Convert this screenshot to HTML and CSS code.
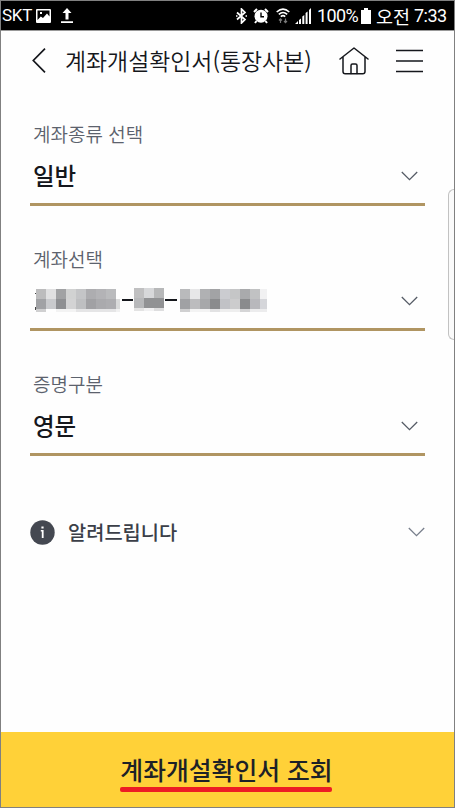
FILE: index.html
```html
<!DOCTYPE html>
<html lang="ko">
<head>
<meta charset="utf-8">
<title>계좌개설확인서(통장사본)</title>
<link rel="stylesheet" href="styles.css">
</head>
<body>
<div class="screen">
  <div class="status">
    <span class="carrier">SKT</span>
    <svg class="picture" width="15" height="14" viewBox="0 0 15 14"><path fill="#fff" fill-rule="evenodd" d="M1 0h13a1 1 0 0 1 1 1v12a1 1 0 0 1-1 1H1a1 1 0 0 1-1-1V1a1 1 0 0 1 1-1zM1.500 1.500v9.500l3.300-3.500 2.200 1.500 4-4.500 2.500 3V1.500zM4 3h2v2H4z"/></svg>
    <svg class="upload" width="12" height="15" viewBox="0 0 12 15"><path fill="#fff" d="M6 0l4.500 5H7.500v6.500h-3V5h-3zM0 13.300h12V15H0z"/></svg>
    <svg class="bluetooth" width="11" height="16" viewBox="0 0 11 16"><path fill="none" stroke="#fff" stroke-width="1.700" d="M1 4.500l8 7L5.500 15V1L9 4.500l-8 7M0 8h1.500M9.500 8H11"/></svg>
    <svg class="alarm" width="16" height="16" viewBox="0 0 16 16"><circle cx="8" cy="8.200" r="6.500" fill="#fff"/><path fill="none" stroke="#fff" stroke-width="2" d="M1 4l3-3M12 1l3 3M3.500 13L2 15M12.500 13l1.500 2"/><path fill="none" stroke="#000" stroke-width="1.400" d="M8 4.500v4.200h3"/></svg>
    <svg class="wifi" width="14" height="16" viewBox="0 0 14 16"><g fill="none" stroke="#fff" stroke-width="1.600"><path d="M.700 4Q7-1.800 13.300 4M2.800 6.400q4.200-3.800 8.400 0M4.800 8.600q2.200-2 4.400 0"/></g><path fill="none" stroke="#777" stroke-width="1.200" d="M4.500 15v-4M3 12.500l1.500-1.700L6 12.500M9.500 10.500v4M8 13l1.500 1.700L11 13"/></svg>
    <svg class="signal" width="16" height="16" viewBox="0 0 16 16"><path fill="#fff" d="M0 16l3-3v3zM4 12l2-1.500V16H4zM7.300 8.500l2-1.500v9h-2zM10.600 5l2-1.500V16h-2zM14 2l2-2v16h-2z"/></svg>
    <span class="percent">100%</span>
    <svg class="battery" width="10" height="16" viewBox="0 0 10 16"><path fill="#fff" d="M3 0h4v2h3v14H0V2h3z"/></svg>
    <span class="ampm">오전</span>
    <span class="clock">7:33</span>
  </div>

  <header class="header">
    <svg class="back" width="14" height="25" viewBox="0 0 14 25"><path fill="none" stroke="#15171c" stroke-width="1.700" d="M13 .700L1.300 12.500 13 24.300"/></svg>
    <h1 class="title">계좌개설확인서(통장사본)</h1>
    <svg class="home" width="30" height="28" viewBox="0 0 30 28"><g fill="none" stroke="#15171c" stroke-width="1.500" stroke-linejoin="round" stroke-linecap="round"><path d="M1 12L15 1l14 11M4 10v14.500a2.300 2.300 0 0 0 2.300 2.300h17.400a2.300 2.300 0 0 0 2.300-2.300V10"/><path d="M12 26.500v-8a1.500 1.500 0 0 1 1.500-1.500h3a1.500 1.500 0 0 1 1.500 1.500v8"/></g></svg>
    <svg class="menu" width="27" height="24" viewBox="0 0 27 24"><path stroke="#15171c" stroke-width="1.700" d="M0 1.500h27M0 12h27M0 22.500h27"/></svg>
  </header>

  <main class="form">
    <section class="field">
      <div class="label">계좌종류 선택</div>
      <div class="value">일반<svg class="chevron" width="17" height="10" viewBox="0 0 17 10"><path d="M.800 1l7.700 7.600L16.200 1"/></svg></div>
    </section>
    <section class="field">
      <div class="label">계좌선택</div>
      <div class="value">
        <svg class="masked" width="235" height="26" viewBox="33 287 235 26" shape-rendering="crispEdges">
          <path fill="#444" d="M35 293h1v1h-1zM35 307h1v3h-1z"/>
          <path fill="#bcbcbd" d="M36 289h10v10H36z"/><path fill="#e0e0e1" d="M46 289h10v10H46z"/><path fill="#a1a2a4" d="M56 289h10v10H56z"/><path fill="#d1d2d2" d="M66 289h10v10H66z"/><path fill="#c4c5c7" d="M76 289h10v10H76z"/><path fill="#adadb0" d="M86 289h10v10H86z"/><path fill="#b3b3b6" d="M96 289h10v10H96z"/><path fill="#babbbd" d="M106 289h10v10h-10z"/>
          <path fill="#a1a2a5" d="M36 299h10v10H36z"/><path fill="#c9cacd" d="M46 299h10v10H46z"/><path fill="#8e8f92" d="M56 299h10v10H56z"/><path fill="#d3d3d4" d="M66 299h10v10H66z"/><path fill="#bebfc1" d="M76 299h10v10H76z"/><path fill="#a1a1a4" d="M86 299h10v10H86z"/><path fill="#aaaaad" d="M96 299h10v10H96z"/><path fill="#adadb0" d="M106 299h10v10h-10z"/><path fill="#d9dada" d="M116 299h4v10h-4z"/>
          <path fill="#d0d0d1" d="M36 309h10v3H36z"/><path fill="#f3f3f3" d="M56 309h20v3H56z"/><path fill="#e5e5e6" d="M76 309h40v3H76z"/><path fill="#f1f1f1" d="M116 309h4v3h-4z"/>
          <path fill="#15171c" d="M122 299h11v2h-11zM165 299h12v2h-12z"/>
          <path fill="#c0c0c1" d="M134 288h10v10h-10z"/><path fill="#d7d8da" d="M144 288h10v10h-10z"/><path fill="#b7b8b9" d="M154 288h10v10h-10z"/><path fill="#b7b8ba" d="M134 298h10v10h-10z"/><path fill="#919294" d="M144 298h20v10h-20z"/><path fill="#e3e3e3" d="M134 308h10v3h-10z"/><path fill="#f1f1f2" d="M144 308h10v3h-10z"/><path fill="#dededf" d="M154 308h10v3h-10z"/>
          <path fill="#b9babc" d="M180 289h10v10h-10z"/><path fill="#e7e7e8" d="M190 289h10v10h-10z"/><path fill="#b0b1b3" d="M200 289h10v10h-10z"/><path fill="#a2a3a5" d="M210 289h10v10h-10z"/><path fill="#cbccd0" d="M220 289h10v10h-10z"/><path fill="#c5c6c7" d="M230 289h10v10h-10z"/><path fill="#a9aaac" d="M240 289h10v10h-10z"/><path fill="#c1c2c3" d="M250 289h10v10h-10z"/><path fill="#f1f1f2" d="M260 289h7v10h-7z"/>
          <path fill="#a0a1a4" d="M180 299h10v10h-10z"/><path fill="#bcbcbe" d="M190 299h10v10h-10z"/><path fill="#a7a8aa" d="M200 299h10v10h-10z"/><path fill="#8a8b8d" d="M210 299h10v10h-10z"/><path fill="#c1c2c6" d="M220 299h10v10h-10z"/><path fill="#cccccd" d="M230 299h10v10h-10z"/><path fill="#8a8b8d" d="M240 299h10v10h-10z"/><path fill="#b8b8bc" d="M250 299h10v10h-10z"/><path fill="#d5d6da" d="M260 299h7v10h-7z"/>
          <path fill="#d0d0d1" d="M180 309h10v3h-10z"/><path fill="#f3f3f3" d="M190 309h20v3h-20z"/><path fill="#e2e2e3" d="M210 309h10v3h-10z"/><path fill="#eee" d="M220 309h20v3h-20z"/><path fill="#d5d5d6" d="M240 309h10v3h-10z"/><path fill="#ececed" d="M250 309h17v3h-17z"/>
        </svg>
        <svg class="chevron" width="17" height="10" viewBox="0 0 17 10"><path d="M.800 1l7.700 7.600L16.200 1"/></svg>
      </div>
    </section>
    <section class="field">
      <div class="label">증명구분</div>
      <div class="value">영문<svg class="chevron" width="17" height="10" viewBox="0 0 17 10"><path d="M.800 1l7.700 7.600L16.200 1"/></svg></div>
    </section>
    <section class="notice">
      <svg width="25" height="25" viewBox="0 0 25 25"><circle cx="12.500" cy="12.500" r="12.200" fill="#444851"/><path fill="#fff" d="M11.400 6.500h2.200v2h-2.200zM10.800 10h2.800v8h-1.800v-6.500h-1z"/></svg>
      <span class="notice-text">알려드립니다</span>
      <svg class="chevron light" width="17" height="10" viewBox="0 0 17 10"><path d="M.800 1l7.700 7.600L16.200 1"/></svg>
    </section>
  </main>

  <footer class="submit"><span class="submit-text">계좌개설확인서 조회</span><span class="underline"></span></footer>
  <div class="handle"></div>
</div>
</body>
</html>
```
FILE: styles.css
```css
* { box-sizing: border-box; }
body { margin: 0; font-family: "Noto Sans CJK KR", sans-serif; }
svg { display: block; flex: none; }
.screen {
  position: relative;
  display: flex;
  flex-direction: column;
  width: 455px;
  height: 808px;
  overflow: hidden;
  border: 1px solid #808080;
  background: #fefefe;
  white-space: nowrap;
}
.status {
  display: flex;
  align-items: center;
  flex: none;
  height: 29px;
  padding: 0 0 0 1px;
  background: #000;
  color: #fff;
  font: 18px/29px Roboto, "Noto Sans CJK KR", sans-serif;
}
.carrier { width: 30px; font-size: 17px; letter-spacing: -0.3px; }
.picture { margin-left: 4px; }
.upload { margin-left: 10px; }
.bluetooth { margin-left: 163px; }
.alarm { margin-left: 6px; }
.wifi { margin-left: 7px; }
.signal { margin-left: 5px; }
.percent { width: 40px; margin-left: 6px; font-size: 18px; letter-spacing: -0.6px; }
.battery { margin-left: 4px; }
.ampm { width: 33px; margin-left: 5px; font: 18.500px/26px "Noto Sans CJK KR", sans-serif; }
.clock { margin-left: 5px; letter-spacing: -0.5px; }
.header {
  display: flex;
  align-items: center;
  flex: none;
  height: 60px;
  padding-left: 31px;
  border-top: 1px solid #999;
}
.title {
  width: 246px;
  margin: 0 0 2px 19px;
  color: #15171c;
  font-size: 22.900px;
  font-weight: 350;
  line-height: 56px;
}
.home { margin-left: 28px; }
.menu { margin-left: 27px; }
.form { flex: 1; padding: 0 29px; }
.field {
  height: 125px;
  padding: 39px 0 0 3px;
  border-bottom: 3px solid #b09562;
}
.field:first-child { height: 116px; padding-top: 30px; }
.label { color: #5c626d; font-size: 19px; font-weight: 350; line-height: 28px; }
.value {
  display: flex;
  align-items: center;
  height: 28px;
  margin-top: 13px;
  color: #15171c;
  font-size: 23.500px;
  font-weight: 500;
  line-height: 28px;
}
.chevron { margin: 2px 7px 0 auto; fill: none; stroke: #555b65; stroke-width: 1.300; }
.notice { display: flex; align-items: center; height: 26px; margin-top: 63px; }
.notice-text { margin-left: 13px; color: #3b3f48; font-size: 19.800px; font-weight: 500; line-height: 26px; }
.light { margin: 0 0 0 auto; stroke: #777e8b; }
.submit {
  display: flex;
  flex-direction: column;
  align-items: center;
  flex: none;
  height: 75px;
  padding: 19px 3px 0 0;
  background: #ffd138;
}
.submit-text { margin-left: 1px; color: #1d2127; font-size: 24.800px; font-weight: 500; line-height: 36px; }
.underline { width: 212px; height: 5px; border-radius: 2px; background: #ed1c24; }
.handle {
  position: absolute;
  top: 188px;
  right: -1px;
  width: 7px;
  height: 151px;
  border: 1px solid #c2c2c2;
  border-right-color: #808080;
  border-radius: 6px 0 0 6px;
  background: #fafafa;
}
```
